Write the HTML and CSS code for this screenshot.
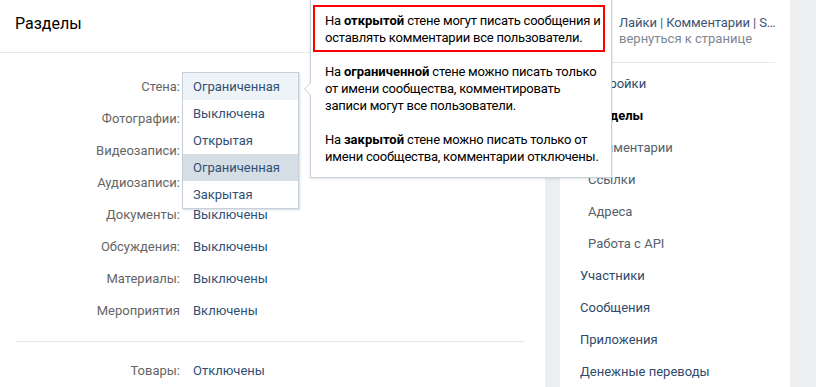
FILE: index.html
```html
<!DOCTYPE html>
<html lang="ru">
<head>
<meta charset="utf-8">
<title>Разделы</title>
<link rel="stylesheet" href="styles.css">
</head>
<body>
<div class="page">
  <section class="main">
    <header class="card-head">Разделы</header>
    <div class="settings">
      <div class="row"><span class="label">Стена:</span><span class="value has-dd">
        <div class="dropdown">
          <div class="dd-item cur">Ограниченная</div>
          <div class="dd-item">Выключена</div>
          <div class="dd-item">Открытая</div>
          <div class="dd-item hover">Ограниченная</div>
          <div class="dd-item">Закрытая</div>
        </div>
      </span></div>
      <div class="row"><span class="label">Фотографии:</span><span class="value"></span></div>
      <div class="row"><span class="label">Видеозаписи:</span><span class="value"></span></div>
      <div class="row"><span class="label">Аудиозаписи:</span><span class="value"></span></div>
      <div class="row"><span class="label">Документы:</span><span class="value">Выключены</span></div>
      <div class="row"><span class="label">Обсуждения:</span><span class="value">Выключены</span></div>
      <div class="row"><span class="label">Материалы:</span><span class="value">Выключены</span></div>
      <div class="row"><span class="label">Мероприятия</span><span class="value">Включены</span></div>
    </div>
    <hr class="sep">
    <div class="settings goods">
      <div class="row"><span class="label">Товары:</span><span class="value">Отключены</span></div>
    </div>
  </section>
  <aside class="side">
    <div class="side-head">
      <div class="title">Лайки | Комментарии | S…</div>
      <div class="back">вернуться к странице</div>
    </div>
    <nav class="menu">
      <div class="item">Настройки</div>
      <div class="item sub sel">Разделы</div>
      <div class="item sub">Комментарии</div>
      <div class="item sub">Ссылки</div>
      <div class="item sub">Адреса</div>
      <div class="item sub">Работа с API</div>
      <div class="item">Участники</div>
      <div class="item">Сообщения</div>
      <div class="item">Приложения</div>
      <div class="item">Денежные переводы</div>
    </nav>
  </aside>
  <div class="tooltip">
    <div class="hl">На <b>открытой</b> стене могут писать сообщения и<br>оставлять комментарии все пользователи.</div>
    <p class="p2">На <b>ограниченной</b> стене можно писать только<br>от имени сообщества, комментировать<br>записи могут все пользователи.</p>
    <p class="p3">На <b>закрытой</b> стене можно писать только от<br>имени сообщества, комментарии отключены.</p>
  </div>
</div>
</body>
</html>
```

FILE: styles.css
```css
html, body {
  margin: 0;
  padding: 0;
}
body {
  background: #edeef0;
  font-family: Roboto, "Open Sans", "DejaVu Sans", sans-serif;
  font-size: 13px;
  color: #000;
}
.page {
  position: relative;
  display: flex;
  gap: 15px;
  height: 387px;
  overflow: hidden;
}
.main {
  flex: none;
  width: 545px;
  background: #fff;
}
.card-head {
  height: 52px;
  line-height: 48px;
  padding-left: 15px;
  font-size: 16px;
  color: #000;
  border-bottom: 1px solid #e7e8ec;
}
.settings {
  padding-top: 18px;
}
.settings.goods {
  padding-top: 13px;
}
.row {
  display: grid;
  grid-template-columns: 165px 1fr;
  column-gap: 13px;
  padding-left: 15px;
  height: 32px;
  line-height: 32px;
}
.label {
  text-align: right;
  color: #656565;
}
.value {
  color: #2f4f74;
}
.has-dd {
  position: relative;
}
.dropdown {
  position: absolute;
  left: -11px;
  top: 1px;
  width: 115px;
  background: #fff;
  border: 1px solid #c5d0db;
  box-shadow: 1px 1px 2px rgba(70, 90, 120, 0.25);
  z-index: 5;
}
.dd-item {
  height: 27px;
  line-height: 26px;
  padding-top: 1px;
  box-sizing: border-box;
  padding-left: 10px;
  color: #2f4f74;
}
.dd-item.cur {
  background: #edf3f6;
}
.dd-item.hover {
  background: #d6dee5;
}
.sep {
  margin: 14px 20px 0 15px;
  border: 0;
  border-top: 1px solid #e7e8ec;
  height: 0;
}
.side {
  flex: none;
  width: 230px;
  background: #fff;
}
.side-head {
  margin: 0 15px;
  padding: 15px 0 15px 44px;
  line-height: 16px;
  border-bottom: 1px solid #e7e8ec;
}
.title {
  color: #3d5573;
  white-space: nowrap;
  letter-spacing: -0.1px;
}
.back {
  color: #7d8691;
}
.menu {
  padding-top: 5px;
}
.item {
  height: 32px;
  line-height: 32px;
  padding-left: 20px;
  color: #2f4a6a;
}
.item.sub {
  padding-left: 28px;
  color: #55606e;
}
.item.sel {
  font-weight: 700;
  color: #000;
}
.tooltip {
  position: absolute;
  left: 310px;
  top: -10px;
  width: 302px;
  box-sizing: border-box;
  background: #fff;
  border: 1px solid #c5d0db;
  box-shadow: 0 1px 3px rgba(0, 0, 0, 0.12);
  padding: 14px 6px 12px 2px;
  line-height: 17px;
  color: #000;
  white-space: nowrap;
  letter-spacing: -0.22px;
  z-index: 10;
}
.tooltip::before,
.tooltip::after {
  content: "";
  position: absolute;
  top: 92px;
  width: 0;
  height: 0;
  border-top: 6px solid transparent;
  border-bottom: 6px solid transparent;
}
.tooltip::before {
  left: -7px;
  border-right: 6px solid #c5d0db;
}
.tooltip::after {
  left: -6px;
  border-right: 6px solid #fff;
}
.hl {
  border: 2px solid #f00;
  padding: 5px 6px 4px 10px;
}
.tooltip p {
  margin: 0;
  padding-left: 12px;
}
.tooltip .p2 {
  margin-top: 11px;
}
.tooltip .p3 {
  margin-top: 17px;
}
.tooltip b {
  font-weight: 700;
  letter-spacing: 0;
}
```
